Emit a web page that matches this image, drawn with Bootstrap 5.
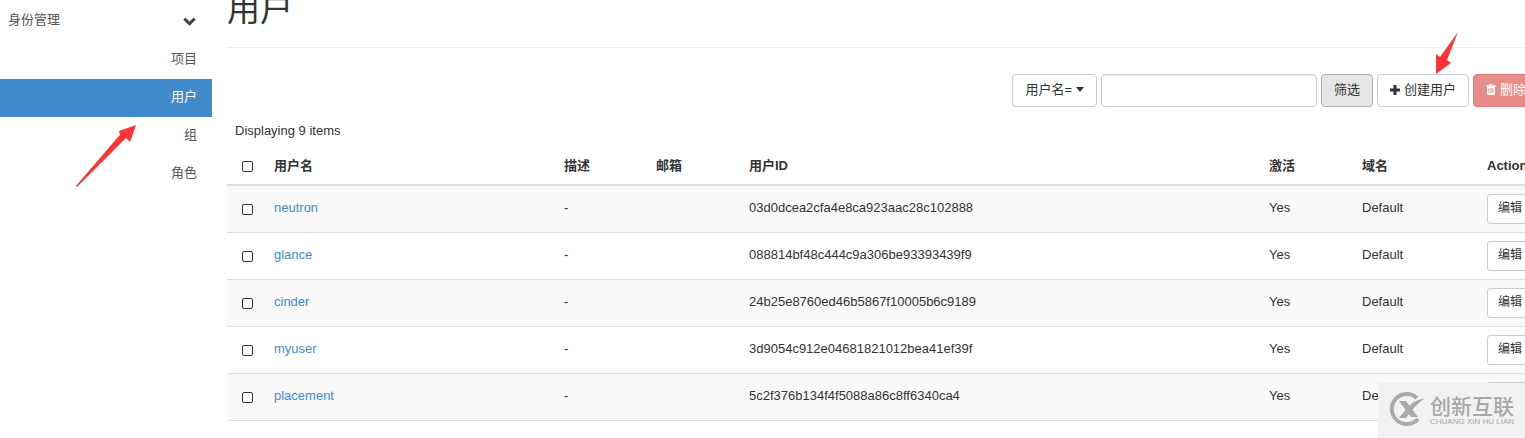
<!DOCTYPE html>
<html lang="zh-CN">
<head>
<meta charset="utf-8">
<meta name="viewport" content="width=device-width, initial-scale=1">
<title>用户</title>
<link href="https://cdn.jsdelivr.net/npm/bootstrap@5.3.0/dist/css/bootstrap.min.css" rel="stylesheet">
<script src="https://cdn.jsdelivr.net/npm/bootstrap@5.3.0/dist/js/bootstrap.bundle.min.js" defer></script>
<style>
body{font:13px/18px "Liberation Sans","Noto Sans CJK SC",sans-serif;color:#333;background:#fff;overflow:hidden}
.side{width:212px}
.side-head{height:41px;padding:0 16px 2px 8px;color:#555;background:none;border:0}
.side-head svg{margin-top:4px}
.side .nav-link{height:38px;padding:9px 15px;color:#555;text-align:right}
.side .nav-link.active{background:#428bca;color:#fff}
.main{margin-left:15px;min-width:0;overflow:hidden}
.title-bar{height:48px;border-bottom:1px solid #eee;overflow:hidden;padding-bottom:13px}
.title-bar h1{font-size:33px;line-height:48px;font-weight:400;margin:0}
.tools{margin-top:26px;gap:4px}
.tools .btn,.tools .form-control{height:33px;font-size:13px;line-height:18px;border-radius:4px;border-color:#ccc;padding:5px 12px 7px;color:#333;white-space:nowrap}
.tools .btn{background:#fff}
.tools .form-control{width:216px;box-shadow:inset 0 1px 1px rgba(0,0,0,.075)}
.tools .btn.filter{background:#e6e6e6;border-color:#adadad}
.tools .btn.remove{background:#e88c89;border-color:#df7b77;color:#fff}
.tools .cut{width:52px}
.tools svg,.side svg{flex:none}
.count{padding:15px 8px 8px}
.users{table-layout:fixed;margin:0;border-collapse:separate;border-spacing:0;color:#333}
.users th,.users td{padding:0 8px;vertical-align:middle;white-space:nowrap;border-bottom:1px solid #ddd;box-shadow:none}
.users th{height:38px;border-bottom:2px solid #ddd}
.users td{height:47px;padding-bottom:2px}
.users tbody tr:nth-child(odd) td{background:#f9f9f9}
.users a{color:#428bca;text-decoration:none}
.users .form-check-input{width:11px;height:11px;margin:1px 0 0 7px;border:1px solid #333;border-radius:2px;display:block}
.users td .form-check-input{margin-top:2px}
.users .btn{height:30px;font-size:12px;line-height:18px;padding:4px 10px 6px;border:1px solid #ccc;border-radius:3px;background:#fff;color:#333;margin-top:2px}
.c-check{width:39px}.c-name{width:290px}.c-desc{width:92px}.c-flag{width:93px}.c-domain{width:125px}.c-act{width:46px}
.arrow-left{left:76px;top:125px}
.arrow-right{right:67px;top:32px}
.brand-mark{right:0;bottom:0;width:147px;height:55px;background:#f2f2f2;color:#a8a8a8;padding:0 0 3px 11px;gap:4px}
.brand-mark .cn{font:500 21px/26px "Noto Sans CJK SC",sans-serif}
.brand-mark .en{font-size:8px;line-height:8px;white-space:nowrap}
</style>
</head>
<body>
<div class="d-flex position-relative">
  <nav class="side flex-shrink-0" aria-label="身份管理">
    <button class="side-head w-100 d-flex justify-content-between align-items-center" type="button">身份管理
      <svg width="13" height="9" viewBox="0 0 13 9" fill="none" stroke="#444" stroke-width="3"><path d="M1.3 1.7 6.5 6.7 11.7 1.7"/></svg>
    </button>
    <div class="nav flex-column">
      <a class="nav-link" href="#">项目</a>
      <a class="nav-link active" href="#" aria-current="page">用户</a>
      <a class="nav-link" href="#">组</a>
      <a class="nav-link" href="#">角色</a>
    </div>
  </nav>
  <svg class="arrow-left position-absolute" width="60" height="62" viewBox="0 0 60 62"><path d="M60 0 54 17 50 13 1 62 0 61 42 12 44 10 43 6Z" fill="#fc3434"/></svg>
  <main class="main flex-grow-1">
    <header class="title-bar d-flex align-items-end"><h1>用户</h1></header>
    <form class="tools d-flex justify-content-end">
      <button class="btn d-flex align-items-center" type="button">用户名=<svg class="ms-1" width="8" height="5" viewBox="0 0 8 5"><path d="M0 0h8L4 5Z" fill="#333"/></svg></button>
      <input class="form-control" type="text" aria-label="用户名">
      <button class="btn filter" type="button">筛选</button>
      <button class="btn d-flex align-items-center" type="button"><svg class="me-1" width="10" height="10" viewBox="0 0 10 10"><path d="M3.5 0h3v3.5H10v3H6.5V10h-3V6.5H0v-3h3.5Z" fill="#333"/></svg>创建用户</button>
      <div class="cut overflow-hidden">
        <button class="btn remove d-flex align-items-center" type="button"><svg class="me-1" width="10" height="11" viewBox="0 0 10 11"><path fill="#fff" fill-rule="evenodd" d="M3.500 0h3l.7 1.500H10v1H9V10q0 1-1 1H2q-1 0-1-1V2.500H0v-1h2.800ZM4 .8l-.3.700h2.600L6 .8ZM2.500 4v5h1V4Zm2 0v5h1V4Zm2 0v5h1V4Z"/></svg>删除用户</button>
      </div>
    </form>
    <div class="count">Displaying 9 items</div>
    <table class="table users">
      <colgroup><col class="c-check"><col class="c-name"><col class="c-desc"><col class="c-flag"><col><col class="c-flag"><col class="c-domain"><col class="c-act"></colgroup>
      <thead><tr><th><input class="form-check-input" type="checkbox" aria-label="全选"></th><th>用户名</th><th>描述</th><th>邮箱</th><th>用户ID</th><th>激活</th><th>域名</th><th>Actions</th></tr></thead>
      <tbody>
        <tr><td><input class="form-check-input" type="checkbox" aria-label="neutron"></td><td><a href="#">neutron</a></td><td>-</td><td></td><td>03d0dcea2cfa4e8ca923aac28c102888</td><td>Yes</td><td>Default</td><td><button class="btn" type="button">编辑</button></td></tr>
        <tr><td><input class="form-check-input" type="checkbox" aria-label="glance"></td><td><a href="#">glance</a></td><td>-</td><td></td><td>088814bf48c444c9a306be93393439f9</td><td>Yes</td><td>Default</td><td><button class="btn" type="button">编辑</button></td></tr>
        <tr><td><input class="form-check-input" type="checkbox" aria-label="cinder"></td><td><a href="#">cinder</a></td><td>-</td><td></td><td>24b25e8760ed46b5867f10005b6c9189</td><td>Yes</td><td>Default</td><td><button class="btn" type="button">编辑</button></td></tr>
        <tr><td><input class="form-check-input" type="checkbox" aria-label="myuser"></td><td><a href="#">myuser</a></td><td>-</td><td></td><td>3d9054c912e04681821012bea41ef39f</td><td>Yes</td><td>Default</td><td><button class="btn" type="button">编辑</button></td></tr>
        <tr><td><input class="form-check-input" type="checkbox" aria-label="placement"></td><td><a href="#">placement</a></td><td>-</td><td></td><td>5c2f376b134f4f5088a86c8ff6340ca4</td><td>Yes</td><td>Default</td><td><button class="btn" type="button">编辑</button></td></tr>
      </tbody>
    </table>
  </main>
  <svg class="arrow-right position-absolute" width="22" height="42" viewBox="0 0 22 42"><path d="M22 0 11 28 15 31 0 42V22l4 3Z" fill="#fc3434"/></svg>
</div>
<div class="brand-mark position-fixed d-flex align-items-center">
  <svg width="37" height="34" viewBox="0 0 37 34" fill="none" stroke="#aaa"><path d="M28 6A15 15 0 1 0 29 27" stroke-width="4"/><path d="M10 9H17L29 25H22Z" fill="#aaa" stroke="none"/><path d="M10 26 18 16Q25 8 36 6Q27 12 17 26Z" fill="#aaa" stroke="none"/></svg>
  <div><div class="cn">创新互联</div><div class="en">CHUANG XIN HU LIAN</div></div>
</div>
</body>
</html>
